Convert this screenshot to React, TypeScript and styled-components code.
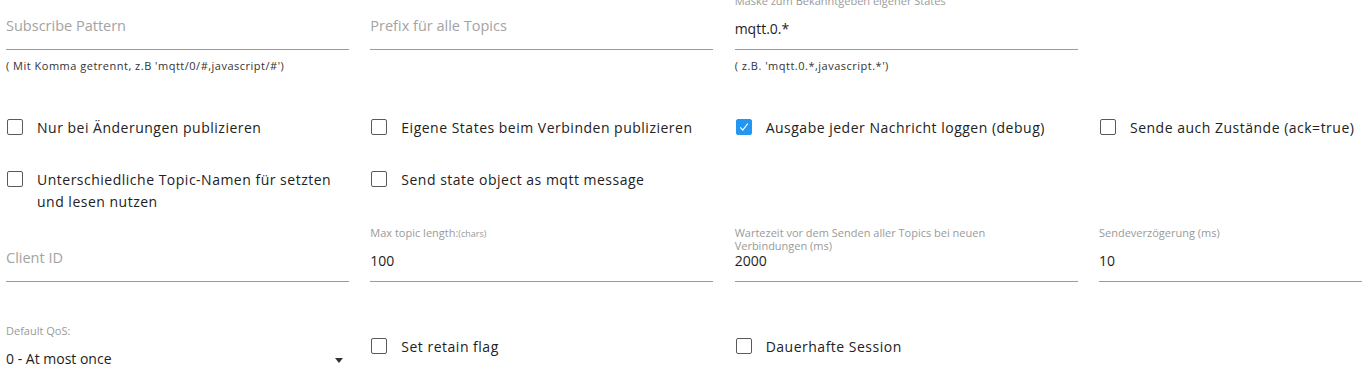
import styled, { createGlobalStyle } from "styled-components";

const GlobalStyle = createGlobalStyle`
  html, body {
    margin: 0;
    padding: 0;
    background: #fff;
    overflow: hidden;
  }
  body {
    font-family: "Open Sans", "Liberation Sans", sans-serif;
    color: #222;
  }
`;

// Whole settings sheet, the fourth column runs off the right edge
const Page = styled.div`
  width: 1362px;
  height: 377px;
  overflow: hidden;
  padding-left: 6px;
  box-sizing: border-box;
`;

const Row = styled.div<{ $top: number }>`
  display: grid;
  grid-template-columns: repeat(4, 343px);
  column-gap: 21.33px;
  row-gap: 30px;
  margin-top: ${(p) => p.$top}px;
  align-items: start;
`;

const Field = styled.div`
  display: flex;
  flex-direction: column;
`;

const FieldLabel = styled.div`
  height: 26px;
  max-width: 290px;
  font-size: 11px;
  line-height: 12.5px;
  color: #9a9a9a;
`;

const Unit = styled.span`
  font-size: 9px;
`;

const ValueRow = styled.div<{ $empty?: boolean }>`
  height: 29px;
  box-sizing: border-box;
  display: flex;
  align-items: flex-end;
  justify-content: space-between;
  padding-bottom: ${(p) => (p.$empty ? 13 : 10)}px;
  border-bottom: 1px solid #9b9b9b;
  font-size: ${(p) => (p.$empty ? 14.5 : 14)}px;
  line-height: 20px;
  color: ${(p) => (p.$empty ? "#a3a3a3" : "#1e1e1e")};
`;

const Helper = styled.div`
  margin-top: 9px;
  font-size: 11px;
  line-height: 14px;
  letter-spacing: 0.5px;
  color: #333;
`;

const Arrow = styled.span`
  width: 0;
  height: 0;
  margin: 0 6px 6px 0;
  border-left: 4px solid transparent;
  border-right: 4px solid transparent;
  border-top: 5px solid #333;
`;

const CheckItem = styled.label<{ $offset?: number }>`
  display: flex;
  align-items: flex-start;
  gap: 14px;
  padding-top: ${(p) => p.$offset ?? 0}px;
  font-size: 14px;
  line-height: 22px;
  letter-spacing: 0.5px;
  color: #222;
`;

const Box = styled.span<{ $checked?: boolean }>`
  flex: none;
  width: 16px;
  height: 16px;
  margin: 2px 0 0 1px;
  box-sizing: border-box;
  border-radius: 2px;
  border: 1px solid ${(p) => (p.$checked ? "#2196f3" : "#5a5a5a")};
  background: ${(p) => (p.$checked ? "#2196f3" : "#fff")};
  display: flex;
  align-items: center;
  justify-content: center;
`;

function Check({ label, checked, offset }: { label: string; checked?: boolean; offset?: number }) {
  return (
    <CheckItem $offset={offset}>
      <Box $checked={checked}>
        {checked && (
          <svg width="12" height="12" viewBox="0 0 12 12">
            <path d="M2.2 6.4 L4.8 9 L9.8 2.6" fill="none" stroke="#fff" strokeWidth="1.2" />
          </svg>
        )}
      </Box>
      <span>{label}</span>
    </CheckItem>
  );
}

interface TextFieldProps {
  label: React.ReactNode;
  value?: string;
  helper?: string;
  select?: boolean;
}

function TextField({ label, value, helper, select }: TextFieldProps) {
  const empty = value === undefined;
  return (
    <Field>
      <FieldLabel>{empty ? "" : label}</FieldLabel>
      <ValueRow $empty={empty}>
        <span>{empty ? label : value}</span>
        {select && <Arrow />}
      </ValueRow>
      {helper !== undefined && <Helper>{helper || "\u00a0"}</Helper>}
    </Field>
  );
}

export default function App() {
  return (
    <>
      <GlobalStyle />
      <Page>
        <Row $top={-5}>
          <TextField label="Subscribe Pattern" helper="( Mit Komma getrennt, z.B 'mqtt/0/#,javascript/#')" />
          <TextField label="Prefix für alle Topics" helper="" />
          <TextField
            label="Maske zum Bekanntgeben eigener States"
            value="mqtt.0.*"
            helper="( z.B. 'mqtt.0.*,javascript.*')"
          />
        </Row>

        <Row $top={44}>
          <Check label="Nur bei Änderungen publizieren" />
          <Check label="Eigene States beim Verbinden publizieren" />
          <Check label="Ausgabe jeder Nachricht loggen (debug)" checked />
          <Check label="Sende auch Zustände (ack=true)" />
          <Check label="Unterschiedliche Topic-Namen für setzten und lesen nutzen" />
          <Check label="Send state object as mqtt message" />
        </Row>

        <Row $top={14}>
          <TextField label="Client ID" />
          <TextField
            label={
              <>
                Max topic length:<Unit>(chars)</Unit>
              </>
            }
            value="100"
          />
          <TextField label="Wartezeit vor dem Senden aller Topics bei neuen Verbindungen (ms)" value="2000" />
          <TextField label="Sendeverzögerung (ms)" value="10" />
        </Row>

        <Row $top={43}>
          <TextField label="Default QoS:" value="0 - At most once" select />
          <Check label="Set retain flag" offset={11} />
          <Check label="Dauerhafte Session" offset={11} />
        </Row>
      </Page>
    </>
  );
}
